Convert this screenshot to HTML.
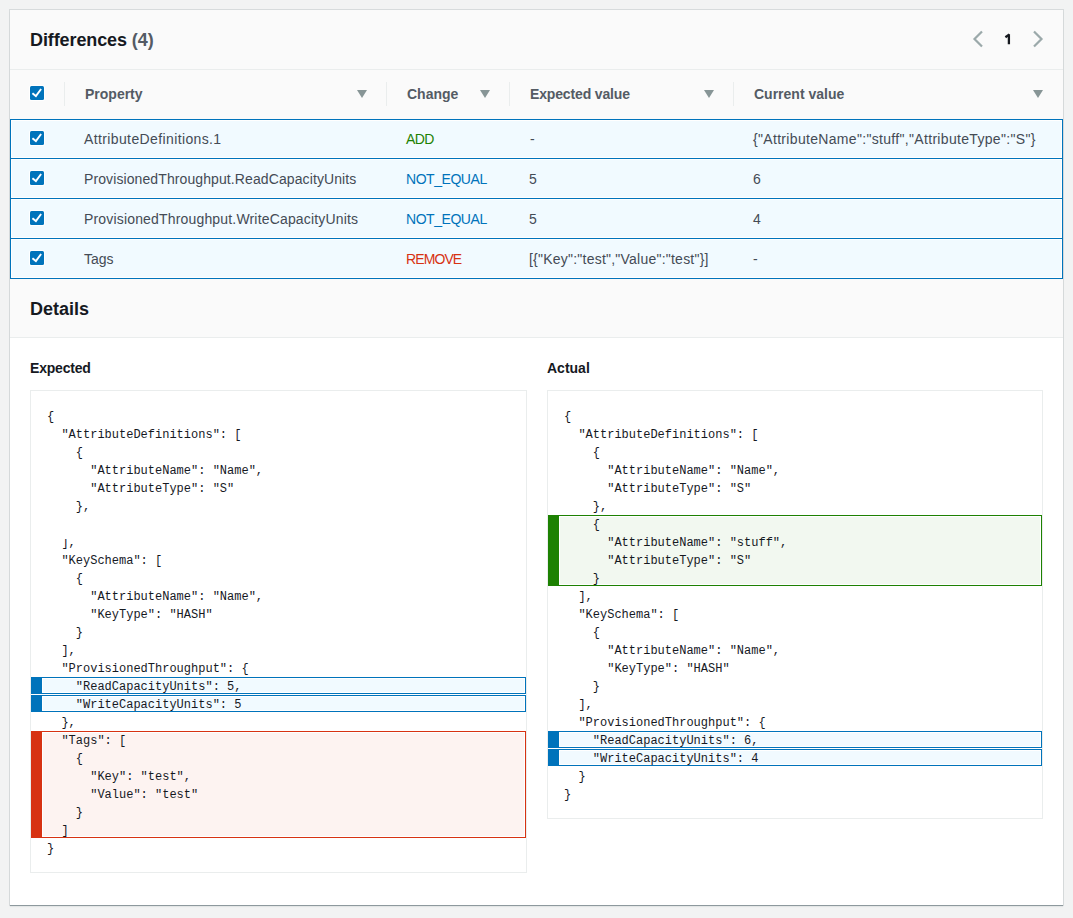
<!DOCTYPE html>
<html><head><meta charset="utf-8">
<style>
html,body{margin:0;padding:0;}
body{width:1073px;height:918px;background:#f2f3f3;position:relative;overflow:hidden;font-family:"Liberation Sans",sans-serif;color:#16191f;}
.abs{position:absolute;}
#card{position:absolute;left:10px;top:10px;width:1053px;height:895px;background:#fff;box-shadow:0 1px 0 0 rgba(0,28,36,.3),0 2px 1px 0 rgba(0,28,36,.06),0 0 0 1px rgba(0,28,36,.11);}
.hdr{position:absolute;left:10px;width:1053px;background:#fafafa;}
.t{position:absolute;white-space:nowrap;line-height:20px;}
.h18{font-size:18px;font-weight:bold;color:#16191f;}
.th{font-size:14px;font-weight:bold;color:#545b64;}
.td{font-size:14px;color:#444b55;}
.sep{position:absolute;top:82px;width:1px;height:24px;background:#eaeded;}
.tri{position:absolute;top:90px;width:0;height:0;border-left:5px solid transparent;border-right:5px solid transparent;border-top:8px solid #879596;}
.cb{position:absolute;left:30px;width:14px;height:14px;border-radius:1.5px;background:#0073bb;box-shadow:0 0 0 1px #fff;}
.cb svg{position:absolute;left:0;top:0;}
.row{position:absolute;left:10px;width:1053px;box-sizing:border-box;border:1px solid #0073bb;background:#f1faff;box-shadow:inset 0 0 0 1px #fff;}
.box{position:absolute;top:390px;box-sizing:border-box;border:1px solid #eaeded;background:#fff;}
.hl{position:absolute;box-sizing:border-box;}
.hl.b{border:1px solid #0073bb;border-left:11px solid #0073bb;background:#f1faff;box-shadow:inset 0 0 0 1px #fff;}
.hl.g{border:1px solid #1d8102;border-left:11px solid #1d8102;background:#f2f8f0;box-shadow:inset 0 0 0 1px #fff;}
.hl.r{border:1px solid #d73212;border-left:11px solid #d73212;background:#fdf3f1;box-shadow:inset 0 0 0 1px #fff;}
pre.code{position:absolute;margin:0;font-family:"Liberation Mono",monospace;font-size:12px;line-height:18px;color:#16191f;white-space:pre;}
</style></head><body>
<div id="card"></div>
<!-- header -->
<div class="hdr" style="top:10px;height:59px;border-bottom:1px solid #eaeded;"></div>
<div class="t h18" style="left:30px;top:30px;letter-spacing:-0.1px;">Differences <span style="color:#545b64">(4)</span></div>
<svg class="abs" style="left:972px;top:30px" width="14" height="18" viewBox="0 0 14 18"><path d="M10 1.5 L2.5 9 L10 16.5" fill="none" stroke="#9ba9aa" stroke-width="2.2"/></svg>
<svg class="abs" style="left:1003px;top:32px" width="10" height="14" viewBox="0 0 10 14"><path d="M5.9 2.2 V12.3 M6.4 2.4 L2.4 5.2" fill="none" stroke="#16191f" stroke-width="2.3"/></svg>
<svg class="abs" style="left:1031px;top:30px" width="14" height="18" viewBox="0 0 14 18"><path d="M3 1.5 L10.5 9 L3 16.5" fill="none" stroke="#9ba9aa" stroke-width="2.2"/></svg>
<!-- table header -->
<div class="hdr" style="top:70px;height:49px;"></div>
<div class="cb" style="top:86px"><svg width="14" height="14" viewBox="0 0 14 14"><path d="M2.4 7.2 L5.9 10.1 L11.1 3.0" fill="none" stroke="#fff" stroke-width="1.9"/></svg></div>
<div class="sep" style="left:64px"></div>
<div class="t th" style="left:85px;top:84px;">Property</div>
<div class="tri" style="left:357px"></div>
<div class="sep" style="left:386px"></div>
<div class="t th" style="left:407px;top:84px;">Change</div>
<div class="tri" style="left:480px"></div>
<div class="sep" style="left:509px"></div>
<div class="t th" style="left:530px;top:84px;letter-spacing:-0.15px;">Expected value</div>
<div class="tri" style="left:704px"></div>
<div class="sep" style="left:733px"></div>
<div class="t th" style="left:754px;top:84px;">Current value</div>
<div class="tri" style="left:1033px"></div>
<!-- rows -->
<div class="row" style="top:119px;height:40px;"></div>
<div class="row" style="top:158px;height:41px;"></div>
<div class="row" style="top:198px;height:41px;"></div>
<div class="row" style="top:238px;height:41px;"></div>
<div class="cb" style="top:131px"><svg width="14" height="14" viewBox="0 0 14 14"><path d="M2.4 7.2 L5.9 10.1 L11.1 3.0" fill="none" stroke="#fff" stroke-width="1.9"/></svg></div>
<div class="cb" style="top:171px"><svg width="14" height="14" viewBox="0 0 14 14"><path d="M2.4 7.2 L5.9 10.1 L11.1 3.0" fill="none" stroke="#fff" stroke-width="1.9"/></svg></div>
<div class="cb" style="top:211px"><svg width="14" height="14" viewBox="0 0 14 14"><path d="M2.4 7.2 L5.9 10.1 L11.1 3.0" fill="none" stroke="#fff" stroke-width="1.9"/></svg></div>
<div class="cb" style="top:251px"><svg width="14" height="14" viewBox="0 0 14 14"><path d="M2.4 7.2 L5.9 10.1 L11.1 3.0" fill="none" stroke="#fff" stroke-width="1.9"/></svg></div>

<div class="t td" style="left:84px;top:129px;letter-spacing:0.38px;">AttributeDefinitions.1</div>
<div class="t td" style="left:406px;top:129px;color:#1d8102;letter-spacing:-0.6px;">ADD</div>
<div class="t td" style="left:530px;top:129px;">-</div>
<div class="t td" style="left:753px;top:129px;letter-spacing:0.32px;">{"AttributeName":"stuff","AttributeType":"S"}</div>

<div class="t td" style="left:84px;top:169px;letter-spacing:0.1px;">ProvisionedThroughput.ReadCapacityUnits</div>
<div class="t td" style="left:406px;top:169px;color:#0073bb;letter-spacing:-0.45px;">NOT_EQUAL</div>
<div class="t td" style="left:529px;top:169px;">5</div>
<div class="t td" style="left:753px;top:169px;">6</div>

<div class="t td" style="left:84px;top:209px;letter-spacing:0.17px;">ProvisionedThroughput.WriteCapacityUnits</div>
<div class="t td" style="left:406px;top:209px;color:#0073bb;letter-spacing:-0.45px;">NOT_EQUAL</div>
<div class="t td" style="left:529px;top:209px;">5</div>
<div class="t td" style="left:753px;top:209px;">4</div>

<div class="t td" style="left:84px;top:249px;">Tags</div>
<div class="t td" style="left:406px;top:249px;color:#d73212;letter-spacing:-0.9px;">REMOVE</div>
<div class="t td" style="left:529px;top:249px;letter-spacing:0.23px;">[{"Key":"test","Value":"test"}]</div>
<div class="t td" style="left:753px;top:249px;">-</div>

<!-- details header -->
<div class="hdr" style="top:279px;height:58px;border-bottom:1px solid #eaeded;"></div>
<div class="t h18" style="left:30px;top:299px;">Details</div>
<div class="t" style="left:30px;top:358px;font-size:14px;font-weight:bold;letter-spacing:-0.2px;">Expected</div>
<div class="t" style="left:547px;top:358px;font-size:14px;font-weight:bold;">Actual</div>

<!-- code boxes -->
<div class="box" style="left:30px;width:497px;height:483px;"></div>
<div class="box" style="left:547px;width:496px;height:429px;"></div>
<div class="hl b" style="left:31px;top:677px;width:495px;height:17px;"></div>
<div class="hl b" style="left:31px;top:695px;width:495px;height:17px;"></div>
<div class="hl r" style="left:31px;top:731px;width:495px;height:107px;"></div>
<div class="hl g" style="left:548px;top:515px;width:494px;height:71px;"></div>
<div class="hl b" style="left:548px;top:731px;width:494px;height:17px;"></div>
<div class="hl b" style="left:548px;top:749px;width:494px;height:17px;"></div>

<pre class="code" style="left:47px;top:408px;">{
  "AttributeDefinitions": [
    {
      "AttributeName": "Name",
      "AttributeType": "S"
    },

  ],
  "KeySchema": [
    {
      "AttributeName": "Name",
      "KeyType": "HASH"
    }
  ],
  "ProvisionedThroughput": {
    "ReadCapacityUnits": 5,
    "WriteCapacityUnits": 5
  },
  "Tags": [
    {
      "Key": "test",
      "Value": "test"
    }
  ]
}</pre>
<div class="abs" style="left:55px;top:532px;width:20px;height:7px;background:#fff;"></div>
<pre class="code" style="left:564px;top:408px;">{
  "AttributeDefinitions": [
    {
      "AttributeName": "Name",
      "AttributeType": "S"
    },
    {
      "AttributeName": "stuff",
      "AttributeType": "S"
    }
  ],
  "KeySchema": [
    {
      "AttributeName": "Name",
      "KeyType": "HASH"
    }
  ],
  "ProvisionedThroughput": {
    "ReadCapacityUnits": 6,
    "WriteCapacityUnits": 4
  }
}</pre>
</body></html>
